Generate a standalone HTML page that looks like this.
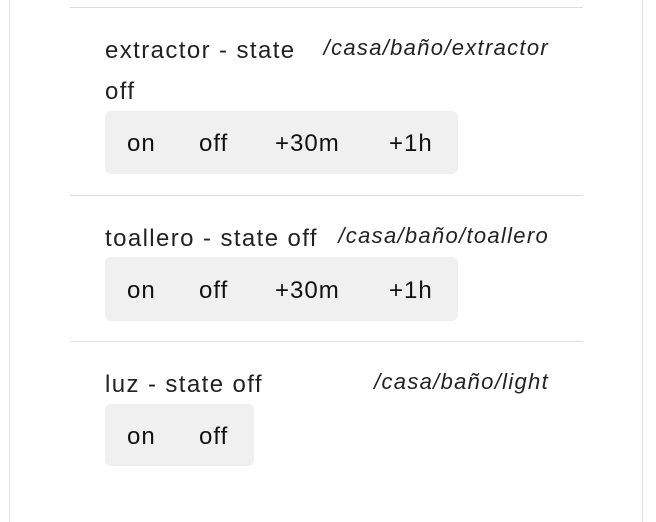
<!DOCTYPE html>
<html><head><meta charset="utf-8"><style>
html,body{margin:0;width:656px;height:522px;overflow:hidden}
body{background:#fff;position:relative;font-family:"Liberation Sans",sans-serif;color:#222}
.card{position:absolute;left:9px;top:-2px;width:634px;height:527px;border:1px solid #e3e3e3;box-sizing:border-box}
.sep{position:absolute;left:70px;width:513px;height:1px;background:#dedede}
.t{position:absolute;font-size:24px;letter-spacing:1.4px;line-height:1;white-space:nowrap}
.p{position:absolute;right:107px;font-size:22px;letter-spacing:1.3px;font-style:italic;line-height:1;white-space:nowrap}
.box{position:absolute;left:105px;background:#f0f0f0;border-radius:6px}
.b{position:absolute;font-size:24px;letter-spacing:1px;line-height:1;color:#111}
</style></head><body>
<div class="card"></div>
<div class="sep" style="top:7px"></div>
<div class="sep" style="top:195px"></div>
<div class="sep" style="top:341px"></div>

<div class="t" style="left:105px;top:39px">extractor - state</div>
<div class="p" style="top:37px">/casa/baño/extractor</div>
<div class="t" style="left:105px;top:80px">off</div>
<div class="box" style="top:111px;width:353px;height:63px"></div>
<div class="b" style="left:127px;top:132px">on</div>
<div class="b" style="left:199px;top:132px">off</div>
<div class="b" style="left:275px;top:132px">+30m</div>
<div class="b" style="left:389px;top:132px">+1h</div>

<div class="t" style="left:105px;top:227px">toallero - state off</div>
<div class="p" style="top:225px">/casa/baño/toallero</div>
<div class="box" style="top:257px;width:353px;height:64px"></div>
<div class="b" style="left:127px;top:279px">on</div>
<div class="b" style="left:199px;top:279px">off</div>
<div class="b" style="left:275px;top:279px">+30m</div>
<div class="b" style="left:389px;top:279px">+1h</div>

<div class="t" style="left:105px;top:373px">luz - state off</div>
<div class="p" style="top:371px">/casa/baño/light</div>
<div class="box" style="top:404px;width:149px;height:62px"></div>
<div class="b" style="left:127px;top:425px">on</div>
<div class="b" style="left:199px;top:425px">off</div>
</body></html>
